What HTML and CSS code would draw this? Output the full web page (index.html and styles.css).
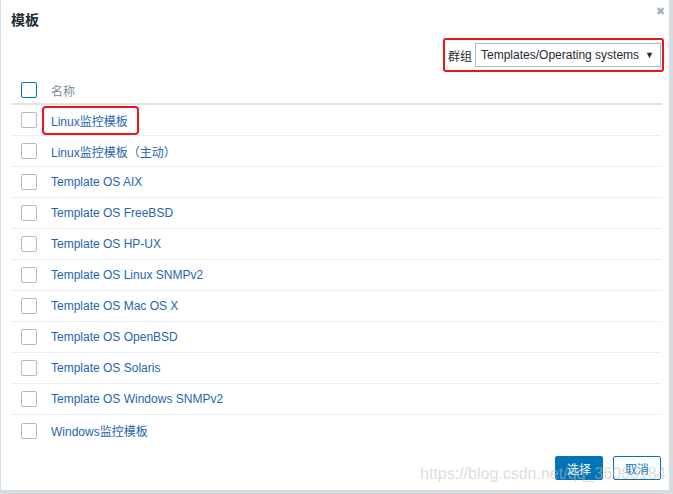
FILE: index.html
```html
<!DOCTYPE html>
<html lang="zh">
<head>
  <meta charset="UTF-8">
  <meta name="viewport" content="width=device-width, initial-scale=1.0">
  <title>模板</title>
  <link rel="stylesheet" href="styles.css">
</head>
<body>
  <div class="dialog">
    <div class="head">
      <span class="title">模板</span>
      <span class="close">&#x2716;</span>
    </div>
    <div class="filter-line">
      <div class="group">
        <span class="label">群组</span>
        <div class="select">
          <span>Templates/Operating systems</span>
          <span class="arrow">&#x25BC;</span>
        </div>
      </div>
    </div>
    <ul class="list">
      <li class="list-head">
        <span class="check blue"></span>
        <span class="name">名称</span>
      </li>
      <li><span class="check"></span><a class="marked">Linux监控模板</a></li>
      <li><span class="check"></span><a>Linux监控模板（主动）</a></li>
      <li><span class="check"></span><a>Template OS AIX</a></li>
      <li><span class="check"></span><a>Template OS FreeBSD</a></li>
      <li><span class="check"></span><a>Template OS HP-UX</a></li>
      <li><span class="check"></span><a>Template OS Linux SNMPv2</a></li>
      <li><span class="check"></span><a>Template OS Mac OS X</a></li>
      <li><span class="check"></span><a>Template OS OpenBSD</a></li>
      <li><span class="check"></span><a>Template OS Solaris</a></li>
      <li><span class="check"></span><a>Template OS Windows SNMPv2</a></li>
      <li><span class="check"></span><a>Windows监控模板</a></li>
    </ul>
    <div class="buttons">
      <button class="btn primary">选择</button>
      <button class="btn">取消</button>
    </div>
    <span class="watermark">https://blog.csdn.net/qq_36083184</span>
  </div>
</body>
</html>
```

FILE: styles.css
```css
* {
  margin: 0px;
  padding: 0px;
  box-sizing: border-box;
}
body {
  width: 673px;
  height: 494px;
  overflow: hidden;
  background-color: #d6dbdf;
  font-family: "Liberation Sans", Arial, "Noto Sans CJK SC", sans-serif;
  font-size: 12px;
}
ul {list-style-type: none;}
.dialog {
  position: relative;
  width: 668px;
  height: 490px;
  margin-left: 1px;
  background-color: white;
  padding: 0px 8px 0px 10px;
}
.head {
  height: 38px;
  display: flex;
  justify-content: space-between;
}
.head > .title {
  font-size: 14px;
  font-weight: 700;
  color: #1f2c33;
  margin-top: 12px;
  line-height: 16px;
}
.head > .close {
  color: #a4b1bb;
  font-size: 11px;
  margin-top: 5px;
  margin-right: -4px;
}
.filter-line {
  display: flex;
  justify-content: flex-end;
  height: 38px;
  margin-right: -3px;
}
.group {
  display: flex;
  align-items: center;
  width: 221px;
  height: 34px;
  border: 2px solid #f0141a;
  border-radius: 3px;
  padding-left: 3px;
}
.group > .label {
  color: #1f2c33;
  margin-right: 3px;
}
.select {
  display: flex;
  justify-content: space-between;
  align-items: center;
  width: 186px;
  height: 24px;
  border: 1px solid #acbbc7;
  padding: 0px 6px 0px 5px;
  color: #1f2c33;
}
.select > .arrow {
  font-size: 9px;
}
.list {
  width: 651px;
}
.list > li {
  display: flex;
  align-items: center;
  height: 31px;
  border-bottom: 1px solid #ebeef0;
  padding-left: 10px;
}
.list > li:last-child {
  border-bottom: none;
}
.list > .list-head {
  height: 29px;
  border-bottom: 2px solid #dfe4e7;
  padding-top: 1px;
}
.check {
  width: 16px;
  height: 16px;
  border: 1px solid #acbbc7;
  border-radius: 2px;
  margin-right: 14px;
}
.check.blue {
  border-color: #0275b8;
}
.list-head > .name {
  color: #768d99;
}
.list a {
  color: #1f65b0;
}
.marked {
  outline: 2px solid #f0141a;
  border-radius: 2px;
  padding: 4px 9px 4px 7px;
  margin-left: -7px;
}
.buttons {
  display: flex;
  justify-content: flex-end;
  gap: 10px;
  margin-top: 10px;
}
.btn {
  width: 48px;
  height: 24px;
  border: 1px solid #0275b8;
  border-radius: 2px;
  background-color: white;
  color: #0275b8;
  font-family: "Liberation Sans", Arial, "Noto Sans CJK SC", sans-serif;
  font-size: 12px;
}
.btn.primary {
  background-color: #0275b8;
  color: white;
}
.watermark {
  position: absolute;
  left: 419px;
  top: 465px;
  font-size: 16px;
  color: rgba(190, 190, 190, 0.55);
  white-space: nowrap;
}
```
